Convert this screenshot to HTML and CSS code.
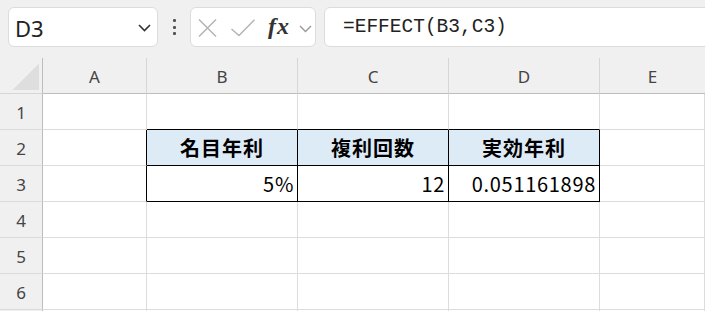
FILE: index.html
```html
<!DOCTYPE html>
<html lang="ja">
<head>
<meta charset="utf-8">
<link rel="stylesheet" href="styles.css">
</head>
<body>
<div class="toolbar">
  <div class="namebox">
    <span class="nametext">D3</span>
    <svg class="chev" width="13" height="8" viewBox="0 0 13 8"><path d="M1 1 L6.5 6.5 L12 1" fill="none" stroke="#333" stroke-width="1.6"/></svg>
  </div>
  <div class="dots"><i></i><i></i><i></i></div>
  <div class="fxbox">
    <svg class="icon-x" width="19" height="18" viewBox="0 0 19 18"><path d="M1 0.5 L18 17.5 M18 0.5 L1 17.5" fill="none" stroke="#b4b4b4" stroke-width="1.5"/></svg>
    <svg class="icon-check" width="24" height="18" viewBox="0 0 24 18"><path d="M0.5 10 L8 16.5 L23.5 0.8" fill="none" stroke="#b4b4b4" stroke-width="1.5"/></svg>
    <span class="fx">fx</span>
    <svg class="chev-small" width="13" height="8" viewBox="0 0 13 8"><path d="M1 1 L6.5 6.5 L12 1" fill="none" stroke="#999" stroke-width="1.4"/></svg>
  </div>
  <div class="formula">=EFFECT(B3,C3)</div>
</div>
<div class="grid">
  <div class="corner"><span class="tri"></span></div>
  <div class="ch">A</div>
  <div class="ch">B</div>
  <div class="ch">C</div>
  <div class="ch">D</div>
  <div class="ch last">E</div>

  <div class="rh">1</div>
  <div class="c"></div>
  <div class="c bb"></div>
  <div class="c bb"></div>
  <div class="c bb"></div>
  <div class="c"></div>

  <div class="rh">2</div>
  <div class="c br"></div>
  <div class="c t hd">名目年利</div>
  <div class="c t hd">複利回数</div>
  <div class="c t hd">実効年利</div>
  <div class="c"></div>

  <div class="rh">3</div>
  <div class="c br"></div>
  <div class="c t num">5%</div>
  <div class="c t num">12</div>
  <div class="c t num">0.051161898</div>
  <div class="c"></div>

  <div class="rh">4</div>
  <div class="c"></div><div class="c"></div><div class="c"></div><div class="c"></div><div class="c"></div>
  <div class="rh">5</div>
  <div class="c"></div><div class="c"></div><div class="c"></div><div class="c"></div><div class="c"></div>
  <div class="rh">6</div>
  <div class="c"></div><div class="c"></div><div class="c"></div><div class="c"></div><div class="c"></div>
  <div class="rh"></div>
  <div class="c"></div><div class="c"></div><div class="c"></div><div class="c"></div><div class="c"></div>
</div>
</body>
</html>
```
FILE: styles.css
```css
* { box-sizing: border-box; }
html, body { margin: 0; padding: 0; }
body {
  width: 705px;
  height: 311px;
  overflow: hidden;
  background: #fff;
  font-family: "Noto Sans", "Noto Sans CJK JP", sans-serif;
}
.toolbar {
  height: 58px;
  background: #f0f0f0;
  display: flex;
  align-items: flex-start;
  padding: 7px 0 0 8px;
  overflow: hidden;
}
.namebox {
  width: 150px;
  height: 40px;
  background: #fff;
  border: 1px solid #dcdcdc;
  border-radius: 6px;
  display: flex;
  align-items: center;
  padding: 0 6px 0 6px;
}
.nametext {
  font-size: 22px;
  color: #222;
  flex: 1;
  line-height: 1;
  padding-top: 1px;
}
.chev { margin-right: 0; margin-top: 2px; }
.dots {
  width: 32px;
  height: 40px;
  display: flex;
  flex-direction: column;
  align-items: center;
  justify-content: center;
  gap: 3.5px;
}
.dots i {
  display: block;
  width: 3px;
  height: 3px;
  background: #555;
  border-radius: 1px;
}
.fxbox {
  width: 126px;
  height: 40px;
  background: #fff;
  border: 1px solid #dcdcdc;
  border-radius: 6px;
  display: flex;
  align-items: center;
  padding-left: 7px;
}
.icon-x { margin-top: 1px; }
.icon-check { margin-left: 14px; margin-top: 1px; }
.fx {
  margin-left: 13px;
  font-family: "Liberation Serif", serif;
  font-style: italic;
  font-weight: bold;
  font-size: 24px;
  color: #333;
  letter-spacing: 1px;
  line-height: 1;
  margin-top: -2px;
}
.chev-small { margin-left: 9px; margin-top: 4px; }
.formula {
  flex: 1;
  height: 40px;
  margin-left: 8px;
  margin-right: -10px;
  background: #fff;
  border: 1px solid #dcdcdc;
  border-radius: 6px;
  padding-left: 18px;
  font-family: "Liberation Mono", monospace;
  font-size: 19.5px;
  color: #222;
  line-height: 38px;
  white-space: nowrap;
}
.grid {
  display: grid;
  grid-template-columns: 43px 104px 151px 151px 151px 1fr;
  grid-auto-rows: 36px;
}
.corner {
  background: #f0f0f0;
  border-right: 1px solid #bdbdbd;
  border-bottom: 1px solid #d6d6d6;
  display: flex;
  align-items: flex-end;
  justify-content: flex-end;
  padding: 0 3px 3px 0;
}
.tri {
  display: block;
  width: 27px;
  height: 26px;
  background: linear-gradient(to bottom right, transparent 50%, #dedede 50%);
}
.ch {
  background: #f0f0f0;
  border-right: 1px solid #d6d6d6;
  border-bottom: 1px solid #bdbdbd;
  display: flex;
  align-items: center;
  justify-content: center;
  font-size: 17px;
  color: #444;
  padding-top: 2px;
}
.ch.last { border-right: none; }
.rh {
  background: #f0f0f0;
  border-right: 1px solid #bdbdbd;
  border-bottom: 1px solid #dadada;
  display: flex;
  align-items: center;
  justify-content: center;
  font-size: 17px;
  color: #444;
  padding-top: 1px;
}
.c {
  border-right: 1px solid #dcdcdc;
  border-bottom: 1px solid #dcdcdc;
  display: flex;
  align-items: center;
  font-family: "Noto Sans CJK JP", sans-serif;
  color: #000;
}
.c.br { border-right-color: #000; }
.c.bb { border-bottom-color: #000; }
.c.t { border-right-color: #000; border-bottom-color: #000; }
.hd {
  background: #ddebf7;
  justify-content: center;
  font-weight: bold;
  font-size: 20px;
  letter-spacing: 1px;
}
.num {
  justify-content: flex-end;
  padding-right: 3px;
  font-size: 20px;
  letter-spacing: 0.7px;
}
```
